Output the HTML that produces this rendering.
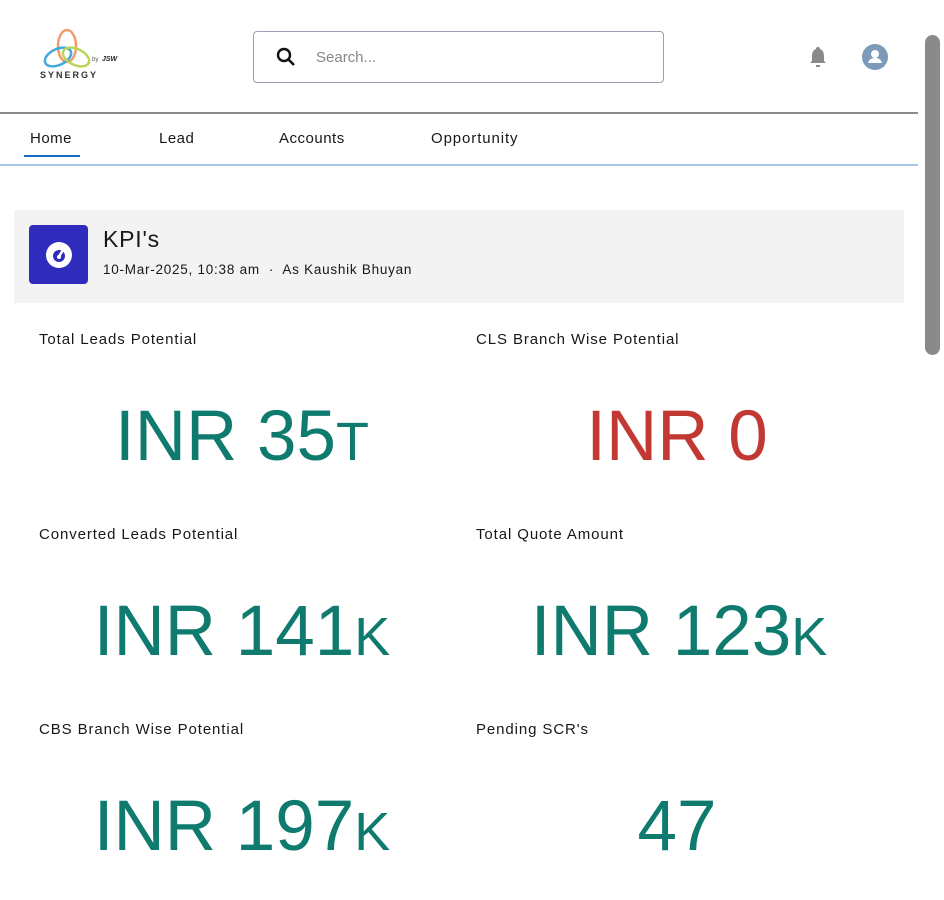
<!DOCTYPE html>
<html><head><meta charset="utf-8"><style>
*{margin:0;padding:0;box-sizing:border-box}
body{width:944px;height:900px;overflow:hidden;background:#fff;font-family:"Liberation Sans",sans-serif;position:relative;color:#181818}
.abs{position:absolute}
.lbl{position:absolute;font-size:15px;color:#181818;letter-spacing:0.9px}
.num{position:absolute;font-size:71px;color:#0f7a6e;text-align:center;width:440px;line-height:80px}
.nav{position:absolute;top:130px;font-size:15px;letter-spacing:0.5px;color:#181818}
</style></head><body>
<!-- logo -->
<svg class="abs" style="left:38px;top:28px" width="100" height="60" viewBox="0 0 100 60">
<ellipse cx="29" cy="18" rx="9" ry="16" fill="none" stroke="#f39a6b" stroke-width="2.5"/>
<ellipse cx="20" cy="29" rx="14" ry="8" fill="none" stroke="#3fa9e0" stroke-width="2.5" transform="rotate(-25 20 29)"/>
<ellipse cx="38" cy="29" rx="14" ry="8" fill="none" stroke="#b7d65a" stroke-width="2.5" transform="rotate(25 38 29)"/>
<text x="2" y="50" font-size="9" font-weight="bold" letter-spacing="2" fill="#333" font-family="Liberation Sans">SYNERGY</text>
<text x="54" y="33" font-size="6" fill="#555" font-family="Liberation Sans">by</text>
<text x="64" y="33" font-size="7" font-style="italic" font-weight="bold" fill="#222" font-family="Liberation Sans">JSW</text>
</svg>
<!-- search -->
<div class="abs" style="left:253px;top:31px;width:411px;height:52px;border:1.5px solid #9aa0b8;border-radius:4px"></div>
<svg class="abs" style="left:276px;top:47px" width="20" height="20" viewBox="0 0 20 20"><circle cx="8" cy="8" r="6" fill="none" stroke="#111" stroke-width="2.4"/><line x1="12.5" y1="12.5" x2="18" y2="18" stroke="#111" stroke-width="2.6"/></svg>
<div class="abs" style="left:316px;top:49px;font-size:15px;color:#888">Search...</div>
<!-- bell -->
<svg class="abs" style="left:807px;top:45px" width="22" height="24" viewBox="0 0 22 24"><path d="M11 2a2 2 0 0 1 2 2c3 1 4 4 4 7v5l2 2H3l2-2v-5c0-3 1-6 4-7a2 2 0 0 1 2-2z" fill="#8a8a8a"/><rect x="9" y="20" width="4" height="2" fill="#8a8a8a"/></svg>
<!-- avatar -->
<svg class="abs" style="left:862px;top:44px" width="26" height="26" viewBox="0 0 26 26"><circle cx="13" cy="13" r="13" fill="#7d9ab9"/><circle cx="13" cy="10" r="4" fill="#fff"/><path d="M6 19c1-4 4-5 7-5s6 1 7 5z" fill="#fff"/></svg>
<!-- scrollbar -->
<div class="abs" style="left:925px;top:35px;width:15px;height:320px;background:#8a8a8a;border-radius:8px"></div>
<div class="abs" style="left:0;top:112px;width:918px;height:2px;background:#8a8a8a"></div>
<!-- nav -->
<div class="nav" style="left:30px">Home</div>
<div class="abs" style="left:24px;top:155px;width:56px;height:2px;background:#1b6bc4"></div>
<div class="nav" style="left:159px">Lead</div>
<div class="nav" style="left:279px">Accounts</div>
<div class="nav" style="left:431px;letter-spacing:0.9px">Opportunity</div>
<div class="abs" style="left:0;top:164px;width:918px;height:2px;background:#a8c6e8"></div>
<!-- KPI header -->
<div class="abs" style="left:14px;top:210px;width:890px;height:93px;background:#f3f3f3"></div>
<div class="abs" style="left:29px;top:225px;width:59px;height:59px;background:#2f2bbd;border-radius:4px"></div>
<svg class="abs" style="left:44px;top:240px" width="30" height="30" viewBox="0 0 30 30"><circle cx="15" cy="15" r="13" fill="#fff"/><circle cx="15" cy="16" r="6" fill="#2f2bbd"/><path d="M14 18l5-8" stroke="#fff" stroke-width="2.5"/><circle cx="15" cy="17" r="2" fill="#fff"/></svg>
<div class="abs" style="left:103px;top:226px;font-size:23px;letter-spacing:0.8px;color:#181818">KPI's</div>
<div class="abs" style="left:103px;top:262px;font-size:13.5px;letter-spacing:0.75px;color:#181818">10-Mar-2025, 10:38 am &nbsp;·&nbsp; As Kaushik Bhuyan</div>
<!-- metrics -->
<div class="lbl" style="left:39px;top:331px">Total Leads Potential</div>
<div class="lbl" style="left:476px;top:331px">CLS Branch Wise Potential</div>
<div class="num" style="left:22px;top:397px">INR 35<span style="font-size:54px">T</span></div>
<div class="num" style="left:457px;top:397px;color:#c23934">INR 0</div>
<div class="lbl" style="left:39px;top:526px">Converted Leads Potential</div>
<div class="lbl" style="left:476px;top:526px">Total Quote Amount</div>
<div class="num" style="left:22px;top:592px">INR 141<span style="font-size:54px">K</span></div>
<div class="num" style="left:459px;top:592px">INR 123<span style="font-size:54px">K</span></div>
<div class="lbl" style="left:39px;top:721px">CBS Branch Wise Potential</div>
<div class="lbl" style="left:476px;top:721px">Pending SCR's</div>
<div class="num" style="left:22px;top:787px">INR 197<span style="font-size:54px">K</span></div>
<div class="num" style="left:457px;top:787px">47</div>
</body></html>
